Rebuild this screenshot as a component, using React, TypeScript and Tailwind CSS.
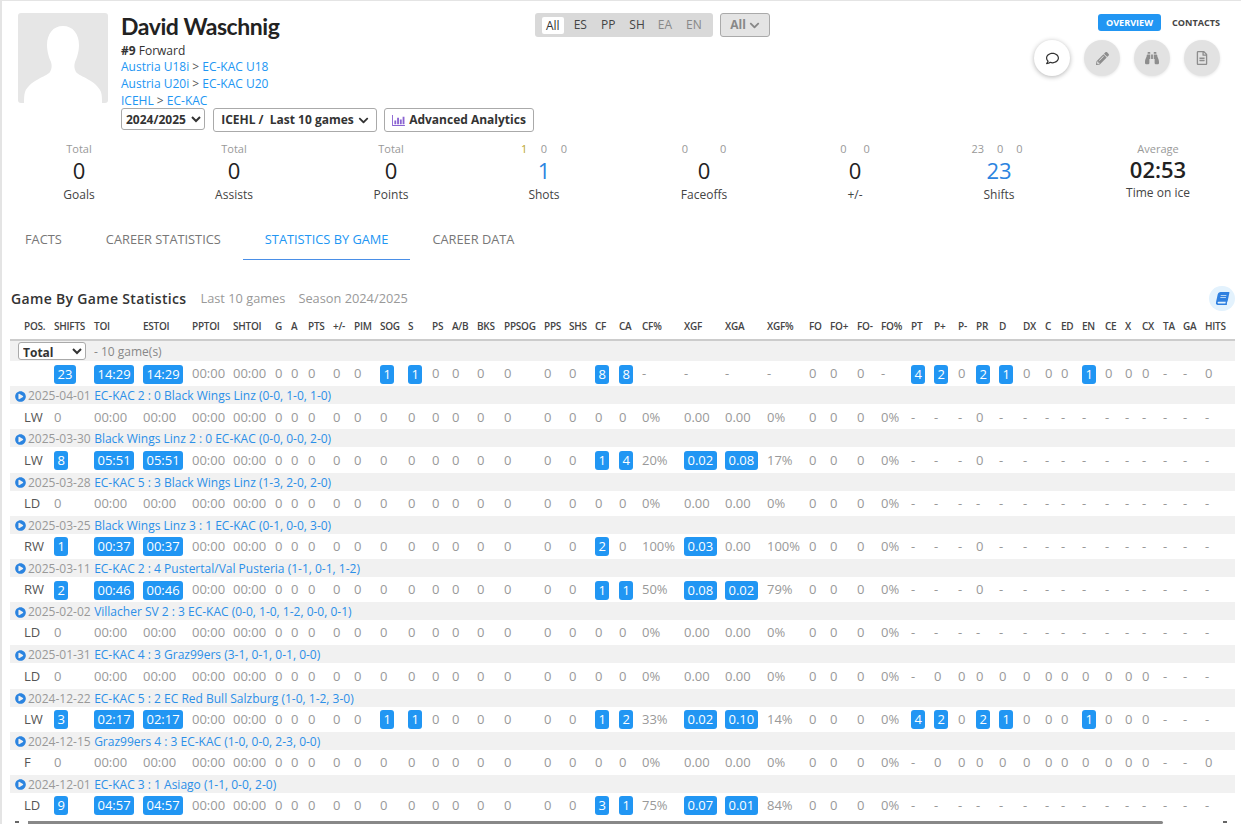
import { FaBinoculars, FaBook, FaChevronDown, FaPencilAlt, FaPlayCircle, FaRegComment, FaRegFileAlt } from 'react-icons/fa'

const SEGMENTS = [
  { label: 'ES', className: 'ml-[10px] text-[#444]' },
  { label: 'PP', className: 'ml-[14px] text-[#444]' },
  { label: 'SH', className: 'ml-[14px] text-[#444]' },
  { label: 'EA', className: 'ml-[13px] text-[#888]' },
  { label: 'EN', className: 'ml-[14px] text-[#888]' },
]

const STATS = [
  { width: 'w-[158px]', top: ['Total'], value: '0', label: 'Goals' },
  { width: 'w-[152px]', top: ['Total'], value: '0', label: 'Assists' },
  { width: 'w-[162px]', top: ['Total'], value: '0', label: 'Points' },
  { width: 'w-[144px]', top: ['1', '0', '0'], value: '1', label: 'Shots', blue: true, gap: 'gap-[13.5px]' },
  { width: 'w-[176px]', top: ['0', '0'], value: '0', label: 'Faceoffs', gap: 'gap-[32px]' },
  { width: 'w-[126px]', top: ['0', '0'], value: '0', label: '+/-', gap: 'gap-[17px]' },
  { width: 'w-[162px]', top: ['23', '0', '0'], value: '23', label: 'Shifts', blue: true, gap: 'gap-[13px] pr-[4px]' },
]

const TABS = ['FACTS', 'CAREER STATISTICS', 'STATISTICS BY GAME', 'CAREER DATA']

const COLUMNS = [
  { name: 'POS.', width: 'w-[44px]' }, { name: 'SHIFTS', width: 'w-[40px]' }, { name: 'TOI', width: 'w-[49px]' },
  { name: 'ESTOI', width: 'w-[49px]' }, { name: 'PPTOI', width: 'w-[41px]' }, { name: 'SHTOI', width: 'w-[42px]' },
  { name: 'G', width: 'w-[16px]' }, { name: 'A', width: 'w-[17px]' }, { name: 'PTS', width: 'w-[25px]' },
  { name: '+/-', width: 'w-[21px]' }, { name: 'PIM', width: 'w-[26px]' }, { name: 'SOG', width: 'w-[28px]' },
  { name: 'S', width: 'w-[24px]' }, { name: 'PS', width: 'w-[20px]' }, { name: 'A/B', width: 'w-[25px]' },
  { name: 'BKS', width: 'w-[27px]' }, { name: 'PPSOG', width: 'w-[40px]' }, { name: 'PPS', width: 'w-[25px]' },
  { name: 'SHS', width: 'w-[26px]' }, { name: 'CF', width: 'w-[24px]' }, { name: 'CA', width: 'w-[23px]' },
  { name: 'CF%', width: 'w-[42px]' }, { name: 'XGF', width: 'w-[41px]' }, { name: 'XGA', width: 'w-[42px]' },
  { name: 'XGF%', width: 'w-[42px]' }, { name: 'FO', width: 'w-[21px]' }, { name: 'FO+', width: 'w-[27px]' },
  { name: 'FO-', width: 'w-[24px]' }, { name: 'FO%', width: 'w-[30px]' }, { name: 'PT', width: 'w-[23px]' },
  { name: 'P+', width: 'w-[24px]' }, { name: 'P-', width: 'w-[18px]' }, { name: 'PR', width: 'w-[23px]' },
  { name: 'D', width: 'w-[24px]' }, { name: 'DX', width: 'w-[22px]' }, { name: 'C', width: 'w-[16px]' },
  { name: 'ED', width: 'w-[21px]' }, { name: 'EN', width: 'w-[23px]' }, { name: 'CE', width: 'w-[20px]' },
  { name: 'X', width: 'w-[17px]' }, { name: 'CX', width: 'w-[21px]' }, { name: 'TA', width: 'w-[20px]' },
  { name: 'GA', width: 'w-[22px]' }, { name: 'HITS', width: 'w-[30px]' },
]

// a leading * means the value sits in a blue badge, _ is an empty cell
const NO_TIME = '00:00 00:00'
const NO_FO = '0 0 0 0%'
const EMPTY_STATS = '0 0 0 0 0 0 0 0 0 0 0 0 0 0 0 0% 0.00 0.00 0%'
const PR_ONLY = '- - - 0 - - - - - - - - - - -'
const ALL_DASH = '- - - - - - - - - - - - - - -'
const ZEROS = '- 0 0 0 0 0 0 0 0 0 0 0 - -'

const TOTAL_ROW = `_ *23 *14:29 *14:29 ${NO_TIME} 0 0 0 0 0 *1 *1 0 0 0 0 0 0 *8 *8 - - - - 0 0 0 - *4 *2 0 *2 *1 0 0 0 *1 0 0 0 - - 0`

const GAMES = [
  { date: '2025-04-01', title: 'EC-KAC 2 : 0 Black Wings Linz (0-0, 1-0, 1-0)', row: `LW 0 00:00 00:00 ${NO_TIME} ${EMPTY_STATS} ${NO_FO} ${PR_ONLY}` },
  { date: '2025-03-30', title: 'Black Wings Linz 2 : 0 EC-KAC (0-0, 0-0, 2-0)', row: `LW *8 *05:51 *05:51 ${NO_TIME} 0 0 0 0 0 0 0 0 0 0 0 0 0 *1 *4 20% *0.02 *0.08 17% ${NO_FO} ${PR_ONLY}` },
  { date: '2025-03-28', title: 'EC-KAC 5 : 3 Black Wings Linz (1-3, 2-0, 2-0)', row: `LD 0 00:00 00:00 ${NO_TIME} ${EMPTY_STATS} ${NO_FO} ${ALL_DASH}` },
  { date: '2025-03-25', title: 'Black Wings Linz 3 : 1 EC-KAC (0-1, 0-0, 3-0)', row: `RW *1 *00:37 *00:37 ${NO_TIME} 0 0 0 0 0 0 0 0 0 0 0 0 0 *2 0 100% *0.03 0.00 100% ${NO_FO} ${PR_ONLY}` },
  { date: '2025-03-11', title: 'EC-KAC 2 : 4 Pustertal/Val Pusteria (1-1, 0-1, 1-2)', row: `RW *2 *00:46 *00:46 ${NO_TIME} 0 0 0 0 0 0 0 0 0 0 0 0 0 *1 *1 50% *0.08 *0.02 79% ${NO_FO} ${PR_ONLY}` },
  { date: '2025-02-02', title: 'Villacher SV 2 : 3 EC-KAC (0-0, 1-0, 1-2, 0-0, 0-1)', row: `LD 0 00:00 00:00 ${NO_TIME} ${EMPTY_STATS} ${NO_FO} ${ALL_DASH}` },
  { date: '2025-01-31', title: 'EC-KAC 4 : 3 Graz99ers (3-1, 0-1, 0-1, 0-0)', row: `LD 0 00:00 00:00 ${NO_TIME} ${EMPTY_STATS} ${NO_FO} ${ZEROS} -` },
  { date: '2024-12-22', title: 'EC-KAC 5 : 2 EC Red Bull Salzburg (1-0, 1-2, 3-0)', row: `LW *3 *02:17 *02:17 ${NO_TIME} 0 0 0 0 0 *1 *1 0 0 0 0 0 0 *1 *2 33% *0.02 *0.10 14% ${NO_FO} *4 *2 0 *2 *1 0 0 0 *1 0 0 0 - - -` },
  { date: '2024-12-15', title: 'Graz99ers 4 : 3 EC-KAC (1-0, 0-0, 2-3, 0-0)', row: `F 0 00:00 00:00 ${NO_TIME} ${EMPTY_STATS} ${NO_FO} ${ZEROS} 0` },
  { date: '2024-12-01', title: 'EC-KAC 3 : 1 Asiago (1-1, 0-0, 2-0)', row: `LD *9 *04:57 *04:57 ${NO_TIME} 0 0 0 0 0 0 0 0 0 0 0 0 0 *3 *1 75% *0.07 *0.01 84% ${NO_FO} ${ALL_DASH}` },
]

function Links({ from, to }: { from: string; to: string }) {
  return (
    <div className="text-[#555]">
      <a className="text-[#2196f3]">{from}</a> &gt; <a className="text-[#2196f3]">{to}</a>
    </div>
  )
}

function DataRow({ row }: { row: string }) {
  const cells = row.split(' ')
  return (
    <tr className="h-[25.2px] bg-white">
      {cells.map((cell, i) => (
        <td key={i} className={`overflow-visible p-0 text-[13px] whitespace-nowrap ${i === 0 ? 'pl-[14px] text-[#555]' : 'text-[#999]'}`}>
          {cell === '_' ? null : cell.startsWith('*') ? (
            <span className="inline-block h-[19px] rounded-[3px] bg-[#2196f3] px-[3.5px] align-middle text-[13px] leading-[19px] text-white">
              {cell.slice(1)}
            </span>
          ) : (
            <span className="relative top-[0.5px]">{cell}</span>
          )}
        </td>
      ))}
    </tr>
  )
}

export default function App() {
  return (
    <div
      className="h-[824px] overflow-hidden bg-white text-[12px] text-[#333] shadow-[inset_2px_1px_0_#e4e4e4]"
      style={{ fontFamily: '"Open Sans", sans-serif' }}
    >
      {/* Player header */}
      <header className="flex h-[141px] pt-[13px] pl-[18px]">
        <div className="h-[90px] w-[90px] overflow-hidden rounded-[3px] bg-[#e6e6e6]">
          <svg viewBox="0 0 90 90" className="h-full w-full">
            <path
              d="M45 13c-10 0-16 8-16 19 0 6 2 13 4 17 1 3 1 7-1 10-4 5-20 8-25 20-1 3-1 7-1 11h78c0-4 0-8-1-11-5-12-21-15-25-20-2-3-2-7-1-10 2-4 4-11 4-17 0-11-6-19-16-19z"
              fill="#fff"
            />
          </svg>
        </div>

        <div className="ml-[13px] w-[414px]">
          <h1 className="text-[23px] leading-[26px] font-bold tracking-[-0.45px] text-[#222]" style={{ fontFamily: 'Lato, sans-serif' }}>
            David Waschnig
          </h1>
          <div className="mt-[3.5px] leading-[16.7px]">
            <div className="text-[#333]">
              <b>#9</b> Forward
            </div>
            <Links from="Austria U18i" to="EC-KAC U18" />
            <Links from="Austria U20i" to="EC-KAC U20" />
            <Links from="ICEHL" to="EC-KAC" />
          </div>
          <div className="-mt-[1px] flex items-start">
            <select className="h-[22px] w-[84px] rounded-[3px] border border-[#aaa] bg-white text-[12px] font-bold text-[#333]">
              <option>2024/2025</option>
            </select>
            <button className="ml-[8px] flex h-[24px] w-[164px] items-center justify-center gap-[4px] rounded-[3px] border border-[#aaa] font-bold whitespace-pre text-[#333]">
              ICEHL /  Last 10 games
              <FaChevronDown className="text-[11px]" />
            </button>
            <button className="ml-[7px] flex h-[24px] w-[150px] items-center justify-center gap-[4px] rounded-[3px] border border-[#aaa] font-bold text-[#333]">
              <svg viewBox="0 0 14 12" className="h-[11px] w-[13px]" fill="#8a63d2">
                <path d="M0 0h1v11h13v1H0z" />
                <path d="M2.5 6h2v4h-2zM5.5 3h2v7h-2zM8.5 5h2v5h-2zM11.5 2h2v8h-2z" />
              </svg>
              Advanced Analytics
            </button>
          </div>
        </div>

        <div className="flex h-[24px] w-[178px] items-center rounded-[3px] bg-[#d9d9d9] pl-[7px]">
          <span className="rounded-[2px] bg-white px-[4px] leading-[17px] text-[#333]">All</span>
          {SEGMENTS.map((segment) => (
            <span key={segment.label} className={segment.className}>
              {segment.label}
            </span>
          ))}
        </div>
        <button className="ml-[7px] flex h-[24px] w-[50px] items-center justify-center gap-[3px] rounded-[3px] border border-[#aaa] bg-[#e4e4e4] font-bold text-[#888]">
          All <FaChevronDown className="text-[11px]" />
        </button>

        <div className="ml-auto flex w-[221px] flex-col pr-[21px]">
          <div className="flex items-center justify-end pt-[1px] text-[9.1px] font-bold">
            <span className="rounded-[3px] bg-[#2196f3] px-[8px] leading-[17px] text-white">OVERVIEW</span>
            <span className="ml-[11px] text-[#444]">CONTACTS</span>
          </div>
          <div className="mt-[9px] flex justify-end gap-[14px]">
            <span className="flex h-[36px] w-[36px] items-center justify-center rounded-full bg-white text-[13px] text-[#333] shadow-[0_1px_5px_rgba(0,0,0,0.3)]">
              <FaRegComment />
            </span>
            <span className="flex h-[36px] w-[36px] items-center justify-center rounded-full bg-[#e2e2e2] text-[13px] text-[#8d8d8d] shadow-[0_1px_3px_rgba(0,0,0,0.1)]">
              <FaPencilAlt />
            </span>
            <span className="flex h-[36px] w-[36px] items-center justify-center rounded-full bg-[#e2e2e2] text-[14px] text-[#8d8d8d] shadow-[0_1px_3px_rgba(0,0,0,0.1)]">
              <FaBinoculars />
            </span>
            <span className="flex h-[36px] w-[36px] items-center justify-center rounded-full bg-[#e2e2e2] text-[14px] text-[#8d8d8d] shadow-[0_1px_3px_rgba(0,0,0,0.1)]">
              <FaRegFileAlt />
            </span>
          </div>
        </div>
      </header>

      {/* Summary figures */}
      <section className="flex h-[64px]">
        {STATS.map((stat) => (
          <div key={stat.label} className={`${stat.width} text-center`}>
            <div className={`flex h-[16px] justify-center text-[11px] leading-[16px] text-[#999] ${stat.gap ?? ''}`}>
              {stat.top.map((item, i) => (
                <span key={i} className={stat.label === 'Shots' && i === 0 ? 'text-[#b9a52c]' : ''}>
                  {item}
                </span>
              ))}
            </div>
            <div className={`text-[22px] leading-[26px] font-medium ${stat.blue ? 'text-[#2b84e0]' : 'text-[#222]'}`}>{stat.value}</div>
            <div className="mt-[3.5px] leading-[16px] text-[#444]">{stat.label}</div>
          </div>
        ))}
        <div className="w-[156px] text-center">
          <div className="text-[11px] leading-[16px] text-[#999]">Average</div>
          <div className="text-[22px] leading-[24px] font-semibold text-[#222]">02:53</div>
          <div className="mt-[4px] leading-[16px] text-[#444]">Time on ice</div>
        </div>
      </section>

      {/* Tabs */}
      <nav className="mt-[13px] flex pl-[3px] text-[12.8px] text-[#777]">
        {TABS.map((tab) => (
          <a
            key={tab}
            className={`px-[22px] pt-[12px] pb-[11px] leading-[18px] ${
              tab === 'STATISTICS BY GAME' ? 'border-b border-[#4a8fe7] text-[#2196f3]' : 'border-b border-transparent'
            }`}
          >
            {tab}
          </a>
        ))}
      </nav>

      {/* Game by game table */}
      <section className="mt-[26px] ml-[10px] w-[1225px]">
        <div className="flex h-[25px] items-center pl-px">
          <h2 className="text-[14px] font-semibold tracking-[0.33px] text-[#333]">Game By Game Statistics</h2>
          <span className="ml-[14px] text-[12.8px] text-[#999]">Last 10 games</span>
          <span className="ml-[13px] text-[12.8px] text-[#999]">Season 2024/2025</span>
          <span className="ml-auto flex h-[25px] w-[26px] items-center justify-center rounded-full bg-[#e3f2fd] text-[13px] text-[#2f80e0]">
            <FaBook className="-skew-x-12" />
          </span>
        </div>

        <table className="mt-[3px] w-[1225px] table-fixed border-collapse">
          <colgroup>
            {COLUMNS.map((col) => (
              <col key={col.name} className={col.width} />
            ))}
          </colgroup>
          <thead>
            <tr className="h-[26px] border-b-2 border-[#ccc]">
              {COLUMNS.map((col, i) => (
                <th key={col.name} className={`p-0 text-left text-[10px] font-semibold tracking-[-0.25px] whitespace-nowrap text-[#444] ${i === 0 ? 'pl-[14px]' : ''}`}>
                  {col.name}
                </th>
              ))}
            </tr>
          </thead>
          <tbody>
            <tr className="h-[21px] bg-[#f1f1f1]">
              <td colSpan={2} className="p-0 pl-[8px]">
                <select className="block h-[18px] w-[68px] rounded-[3px] border border-[#aaa] bg-white text-[12px] font-bold text-[#333]">
                  <option>Total</option>
                </select>
              </td>
              <td colSpan={42} className="p-0 pt-[1px] text-[12px] text-[#888]">
                - 10 game(s)
              </td>
            </tr>
            <DataRow row={TOTAL_ROW} />
            {GAMES.map((game) => (
              <GameRows key={game.date} date={game.date} title={game.title} row={game.row} />
            ))}
          </tbody>
        </table>

        {/* horizontal scrollbar, only its top edge is in view */}
        <div className="mt-[3px] flex h-[3px] items-start pl-[5px]">
          <span className="h-[2px] w-[4px] bg-[#666]" />
          <span className="ml-[9px] h-[3px] w-[1135px] rounded-r-[3px] bg-[#888]" />
          <span className="ml-[60px] h-[2px] w-[4px] bg-[#666]" />
        </div>
      </section>
    </div>
  )
}

function GameRows({ date, title, row }: { date: string; title: string; row: string }) {
  return (
    <>
      <tr className="h-[18px] bg-[#f1f1f1]">
        <td colSpan={44} className="p-0 pl-[5px] text-[12px] leading-[16px] whitespace-nowrap">
          <span className="flex items-center pt-[2px]">
            <FaPlayCircle className="mr-[2px] text-[11px] text-[#2b84e0]" />
            <span className="text-[#999]">{date}</span>
            <a className="ml-[3.5px] text-[#2b8fe8]">{title}</a>
          </span>
        </td>
      </tr>
      <DataRow row={row} />
    </>
  )
}
